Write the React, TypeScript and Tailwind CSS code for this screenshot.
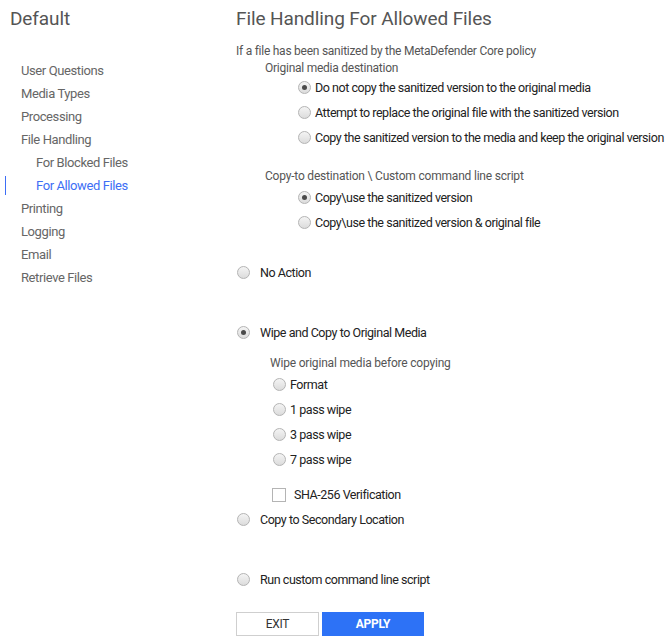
import React from "react";

const font = { fontFamily: "Roboto, 'Liberation Sans', sans-serif" };

function Radio({ checked }: { checked?: boolean }) {
  return (
    <span className="inline-flex h-[13px] w-[13px] shrink-0 items-center justify-center rounded-full border border-[#b4b4b4] bg-gradient-to-b from-[#f4f4f4] to-[#dcdcdc]">
      {checked && <span className="block h-[5px] w-[5px] rounded-full bg-[#4a4a4a]" />}
    </span>
  );
}

function RadioRow({ label, checked, indent, gap }: { label: string; checked?: boolean; indent: string; gap: string }) {
  return (
    <div className={`flex h-[25px] items-center whitespace-nowrap ${indent}`}>
      <Radio checked={checked} />
      <span className={`${gap} mt-[2px] text-[12.5px] tracking-[-0.45px] text-[#222]`}>{label}</span>
    </div>
  );
}

export default function App() {
  const nav: { label: string; sub?: boolean; active?: boolean }[] = [
    { label: "User Questions" },
    { label: "Media Types" },
    { label: "Processing" },
    { label: "File Handling" },
    { label: "For Blocked Files", sub: true },
    { label: "For Allowed Files", sub: true, active: true },
    { label: "Printing" },
    { label: "Logging" },
    { label: "Email" },
    { label: "Retrieve Files" },
  ];
  return (
    <div className="flex min-h-[644px] w-[671px] bg-white" style={font}>
      <div className="w-[236px] shrink-0">
        <div className="mt-[7px] h-[24px] pl-[10px] text-[19px] leading-[24px] tracking-[-0.1px] text-[#555]">Default</div>
        <div className="mt-[28px]">
          {nav.map((n) => (
            <div key={n.label} className="relative flex h-[23px] items-center">
              {n.active && <span className="absolute left-[5px] top-[2px] h-[19px] w-[1px] bg-[#3d6ef5]" />}
              <span
                className={`${n.sub ? "pl-[36px]" : "pl-[21px]"} text-[13px] tracking-[-0.4px] ${n.active ? "text-[#3d6ef5]" : "text-[#666]"}`}
              >
                {n.label}
              </span>
            </div>
          ))}
        </div>
      </div>
      <div className="flex-1">
        <div className="mt-[7px] h-[24px] text-[19px] leading-[24px] tracking-[-0.1px] text-[#555]">File Handling For Allowed Files</div>
        <div className="mt-[11px] flex h-[18px] items-center text-[12px] tracking-[-0.25px] text-[#555]">If a file has been sanitized by the MetaDefender Core policy</div>
        <div className="flex h-[15px] items-center pl-[29px] text-[12px] tracking-[-0.25px] text-[#555]">Original media destination</div>
        <RadioRow indent="pl-[62px]" gap="ml-[4px]" checked label="Do not copy the sanitized version to the original media" />
        <RadioRow indent="pl-[62px]" gap="ml-[4px]" label="Attempt to replace the original file with the sanitized version" />
        <RadioRow indent="pl-[62px]" gap="ml-[4px]" label="Copy the sanitized version to the media and keep the original version" />
        <div className="mt-[17px] flex h-[18px] items-center pl-[29px] text-[12px] tracking-[-0.2px] text-[#555]">Copy-to destination \ Custom command line script</div>
        <RadioRow indent="pl-[62px]" gap="ml-[4px]" checked label="Copy\use the sanitized version" />
        <RadioRow indent="pl-[62px]" gap="ml-[4px]" label="Copy\use the sanitized version & original file" />
        <div className="mt-[25px]">
          <RadioRow indent="pl-[1px]" gap="ml-[10px]" label="No Action" />
        </div>
        <div className="mt-[35px]">
          <RadioRow indent="pl-[1px]" gap="ml-[10px]" checked label="Wipe and Copy to Original Media" />
        </div>
        <div className="mt-[9px] flex h-[18px] items-center pl-[34px] text-[12px] tracking-[-0.2px] text-[#555]">Wipe original media before copying</div>
        <RadioRow indent="pl-[37px]" gap="ml-[4px]" label="Format" />
        <RadioRow indent="pl-[37px]" gap="ml-[4px]" label="1 pass wipe" />
        <RadioRow indent="pl-[37px]" gap="ml-[4px]" label="3 pass wipe" />
        <RadioRow indent="pl-[37px]" gap="ml-[4px]" label="7 pass wipe" />
        <div className="mt-[10px] flex h-[25px] items-center pl-[36px]">
          <span className="block h-[14px] w-[14px] border border-[#b4b4b4] bg-white" />
          <span className="ml-[8px] mt-[2px] text-[12.5px] tracking-[-0.45px] text-[#222]">SHA-256 Verification</span>
        </div>
        <RadioRow indent="pl-[1px]" gap="ml-[10px]" label="Copy to Secondary Location" />
        <div className="mt-[35px]">
          <RadioRow indent="pl-[1px]" gap="ml-[10px]" label="Run custom command line script" />
        </div>
        <div className="mt-[20px] flex gap-[3px]">
          <button className="h-[24px] w-[83px] border border-[#cfcfcf] bg-white text-[12px] tracking-[-0.3px] text-[#333]">EXIT</button>
          <button className="h-[24px] w-[102px] bg-[#2d72f6] text-[12px] font-bold tracking-[-0.3px] text-white">APPLY</button>
        </div>
      </div>
    </div>
  );
}
